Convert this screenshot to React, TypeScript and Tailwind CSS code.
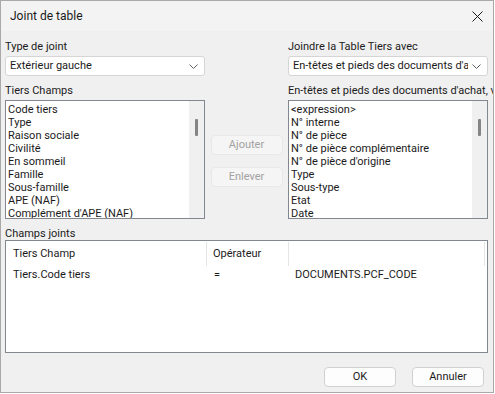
import React from "react";

const tiersFields = [
  "Code tiers",
  "Type",
  "Raison sociale",
  "Civilité",
  "En sommeil",
  "Famille",
  "Sous-famille",
  "APE (NAF)",
  "Complément d'APE (NAF)",
];

const docFields = [
  "<expression>",
  "N° interne",
  "N° de pièce",
  "N° de pièce complémentaire",
  "N° de pièce d'origine",
  "Type",
  "Sous-type",
  "Etat",
  "Date",
];

const Chevron = () => (
  <svg width="9" height="5" viewBox="0 0 9 5" className="shrink-0">
    <path d="M0.5 0.5 L4.5 4.5 L8.5 0.5" fill="none" stroke="#606060" strokeWidth="1" />
  </svg>
);

const Combo = ({ value }: { value: string }) => (
  <div className="h-[20px] w-[200px] flex items-center bg-white border border-[#d5d5d5] rounded-[3px] pl-[4px] pr-[6px]">
    <span className="flex-1 overflow-hidden whitespace-nowrap">{value}</span>
    <span className="pl-[4px]">
      <Chevron />
    </span>
  </div>
);

const ListBox = ({ items }: { items: string[] }) => (
  <div className="h-[119px] w-[200px] flex bg-white border border-[#828790] overflow-hidden">
    <div className="flex-1 pt-[2px] pl-[2px] overflow-hidden">
      {items.map((it) => (
        <div key={it} className="h-[13px] leading-[13px] whitespace-nowrap">
          {it}
        </div>
      ))}
    </div>
    {/* scrollbar track with thin thumb */}
    <div className="w-[15px] bg-[#f0f0f0] pt-[18px] flex justify-center">
      <div className="w-[3px] h-[17px] bg-[#858585] rounded-[1px]" />
    </div>
  </div>
);

const Btn = ({ label, disabled }: { label: string; disabled?: boolean }) => (
  <div
    className={
      disabled
        ? "h-[20px] w-[72px] flex items-center justify-center rounded-[4px] border border-[#e8e8e8] bg-[#f5f5f5] text-[#a2a2a2]"
        : "h-[20px] w-[72px] flex items-center justify-center rounded-[4px] border border-[#d0d0d0] bg-[#fdfdfd] text-[#1b1b1b]"
    }
  >
    {label}
  </div>
);

export default function App() {
  return (
    <div className="w-[495px] h-[394px] bg-white overflow-hidden">
      <div
        className="w-[494px] h-[393px] border border-[#a9a9a9] bg-[#f0f0f0] flex flex-col overflow-hidden text-[11px] text-[#1b1b1b]"
        style={{ fontFamily: "Roboto, 'Liberation Sans', sans-serif" }}
      >
        {/* title bar */}
        <div className="h-[30px] shrink-0 bg-[#f3f3f3] flex items-center pl-[9px] pr-[8px]">
          <span className="flex-1 text-[12px] text-[#1a1a1a]">Joint de table</span>
          <svg width="11" height="11" viewBox="0 0 11 11" className="mr-[2px]">
            <path d="M0.5 0.5 L10.5 10.5 M10.5 0.5 L0.5 10.5" stroke="#1a1a1a" strokeWidth="1" />
          </svg>
        </div>

        <div className="flex-1 pl-[4px] pt-[8px] flex flex-col">
          {/* join type + target table */}
          <div className="flex">
            <div className="w-[200px] flex flex-col">
              <div className="h-[17px] leading-[15px]">Type de joint</div>
              <Combo value="Extérieur gauche" />
            </div>
            <div className="w-[83px]" />
            <div className="w-[200px] flex flex-col">
              <div className="h-[17px] leading-[15px] whitespace-nowrap">Joindre la Table Tiers avec</div>
              <Combo value="En-têtes et pieds des documents d'achat" />
            </div>
          </div>

          {/* field lists */}
          <div className="flex mt-[8px]">
            <div className="w-[200px] flex flex-col">
              <div className="h-[16px] leading-[14px]">Tiers Champs</div>
              <ListBox items={tiersFields} />
            </div>
            <div className="w-[83px] flex flex-col items-center pt-[51px] gap-[12px]">
              <Btn label="Ajouter" disabled />
              <Btn label="Enlever" disabled />
            </div>
            <div className="w-[200px] flex flex-col">
              <div className="h-[16px] leading-[14px] whitespace-nowrap">
                En-têtes et pieds des documents d'achat, ventes
              </div>
              <ListBox items={docFields} />
            </div>
          </div>

          {/* joined fields */}
          <div className="h-[21px] pt-[8px] leading-[13px]">Champs joints</div>
          <div className="w-[483px] h-[113px] bg-white border border-[#828790] flex flex-col">
            <div className="flex h-[25px] pt-[1px]">
              <div className="w-[201px] border-r border-[#e5e5e5] pl-[7px] flex items-center">Tiers Champ</div>
              <div className="w-[82px] border-r border-[#e5e5e5] pl-[6px] flex items-center">Opérateur</div>
              <div className="w-[196px] border-r border-[#e5e5e5]" />
            </div>
            <div className="flex h-[18px] items-center">
              <div className="w-[202px] pl-[7px]">Tiers.Code tiers</div>
              <div className="w-[82px] pl-[6px]">=</div>
              <div className="pl-[5px]">DOCUMENTS.PCF_CODE</div>
            </div>
          </div>

          {/* dialog buttons */}
          <div className="flex justify-end gap-[15px] mt-[14px] pr-[9px]">
            <div className="w-[73px]">
              <Btn label="OK" />
            </div>
            <Btn label="Annuler" />
          </div>
        </div>
      </div>
    </div>
  );
}
